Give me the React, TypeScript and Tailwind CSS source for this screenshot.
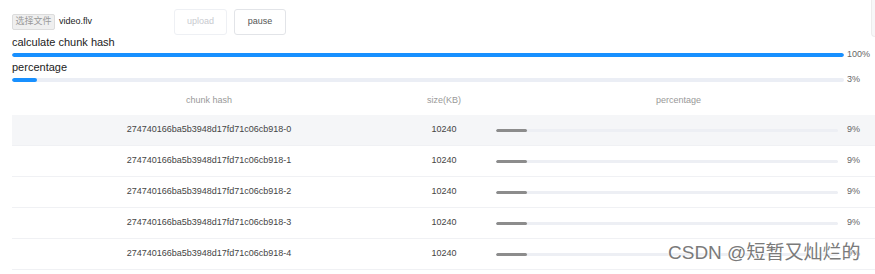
import React from "react";

const rows = [0, 1, 2, 3, 4].map((i) => ({
  hash: `274740166ba5b3948d17fd71c06cb918-${i}`,
  size: 10240,
  pct: 9,
}));

export default function App() {
  return (
    <div
      className="relative w-[875px] h-[274px] overflow-hidden bg-white"
      style={{ fontFamily: '"Liberation Sans", Arial, "Noto Sans CJK SC", sans-serif' }}
    >
      <div className="absolute right-0 top-0 w-[4px] h-[37px] bg-[#f7f7f8] border-l border-b border-[#ececec] rounded-bl-[4px]" />
      <div className="pl-[12px] pt-[9px]">
        <div className="flex items-center h-[26px]">
          <div className="flex items-center w-[162px]">
            <span className="h-[16px] w-[43px] flex items-center justify-center bg-[#efefef] border border-[#dcdcdc] rounded-[2px] text-[9px] text-[#999]">
              选择文件
            </span>
            <span className="ml-[4px] text-[9px] text-[#222]">video.flv</span>
          </div>
          <button className="h-[26px] w-[53px] border border-[#eef0f4] rounded-[3px] text-[9px] text-[#c8cacf] bg-white">
            upload
          </button>
          <button className="ml-[7px] h-[26px] w-[52px] border border-[#e2e4e8] rounded-[3px] text-[9px] text-[#555] bg-white">
            pause
          </button>
        </div>
        <div className="text-[11px] leading-[13px] text-[#222] mt-[1px] h-[13px]">calculate chunk hash</div>
        <div className="flex items-center h-[12px]">
          <div className="w-[832px] h-[4px] rounded-full bg-[#ebeef5] overflow-hidden">
            <div className="h-full bg-[#1890ff] rounded-full" style={{ width: "100%" }} />
          </div>
          <span className="ml-[3px] text-[9px] text-[#666]">100%</span>
        </div>
        <div className="text-[11px] leading-[13px] text-[#222] h-[13px]">percentage</div>
        <div className="flex items-center h-[12px]">
          <div className="w-[832px] h-[4px] rounded-full bg-[#ebeef5] overflow-hidden">
            <div className="h-full bg-[#1890ff] rounded-full" style={{ width: "3%" }} />
          </div>
          <span className="ml-[3px] text-[9px] text-[#666]">3%</span>
        </div>
        <div className="text-[9px]">
          <div className="flex items-center h-[29px] text-[#999]">
            <div className="w-[394px] text-center">chunk hash</div>
            <div className="w-[76px] text-center">size(KB)</div>
            <div className="flex-1 text-center">percentage</div>
          </div>
          {rows.map((r, i) => (
            <div
              key={i}
              className={`flex items-center h-[31px] border-b border-[#f0f1f4] text-[#444] ${
                i === 0 ? "bg-[#f5f6f8]" : "bg-white"
              }`}
            >
              <div className="w-[394px] text-center">{r.hash}</div>
              <div className="w-[76px] text-center">{r.size}</div>
              <div className="flex-1 flex items-center pl-[14px]">
                <div className="w-[342px] h-[3px] rounded-full bg-[#edeff4] overflow-hidden">
                  <div className="h-full bg-[#8c8c8c] rounded-full" style={{ width: `${r.pct}%` }} />
                </div>
                <span className="ml-[9px] text-[#666]">{r.pct}%</span>
              </div>
            </div>
          ))}
        </div>
      </div>
      <div
        className="absolute left-[668px] top-[240px] text-[19px] leading-[26px] text-[#7a7a7a] whitespace-nowrap"
        style={{ textShadow: "0 0 2px #fff, 0 0 2px #fff" }}
      >
        CSDN @短暂又灿烂的
      </div>
    </div>
  );
}
